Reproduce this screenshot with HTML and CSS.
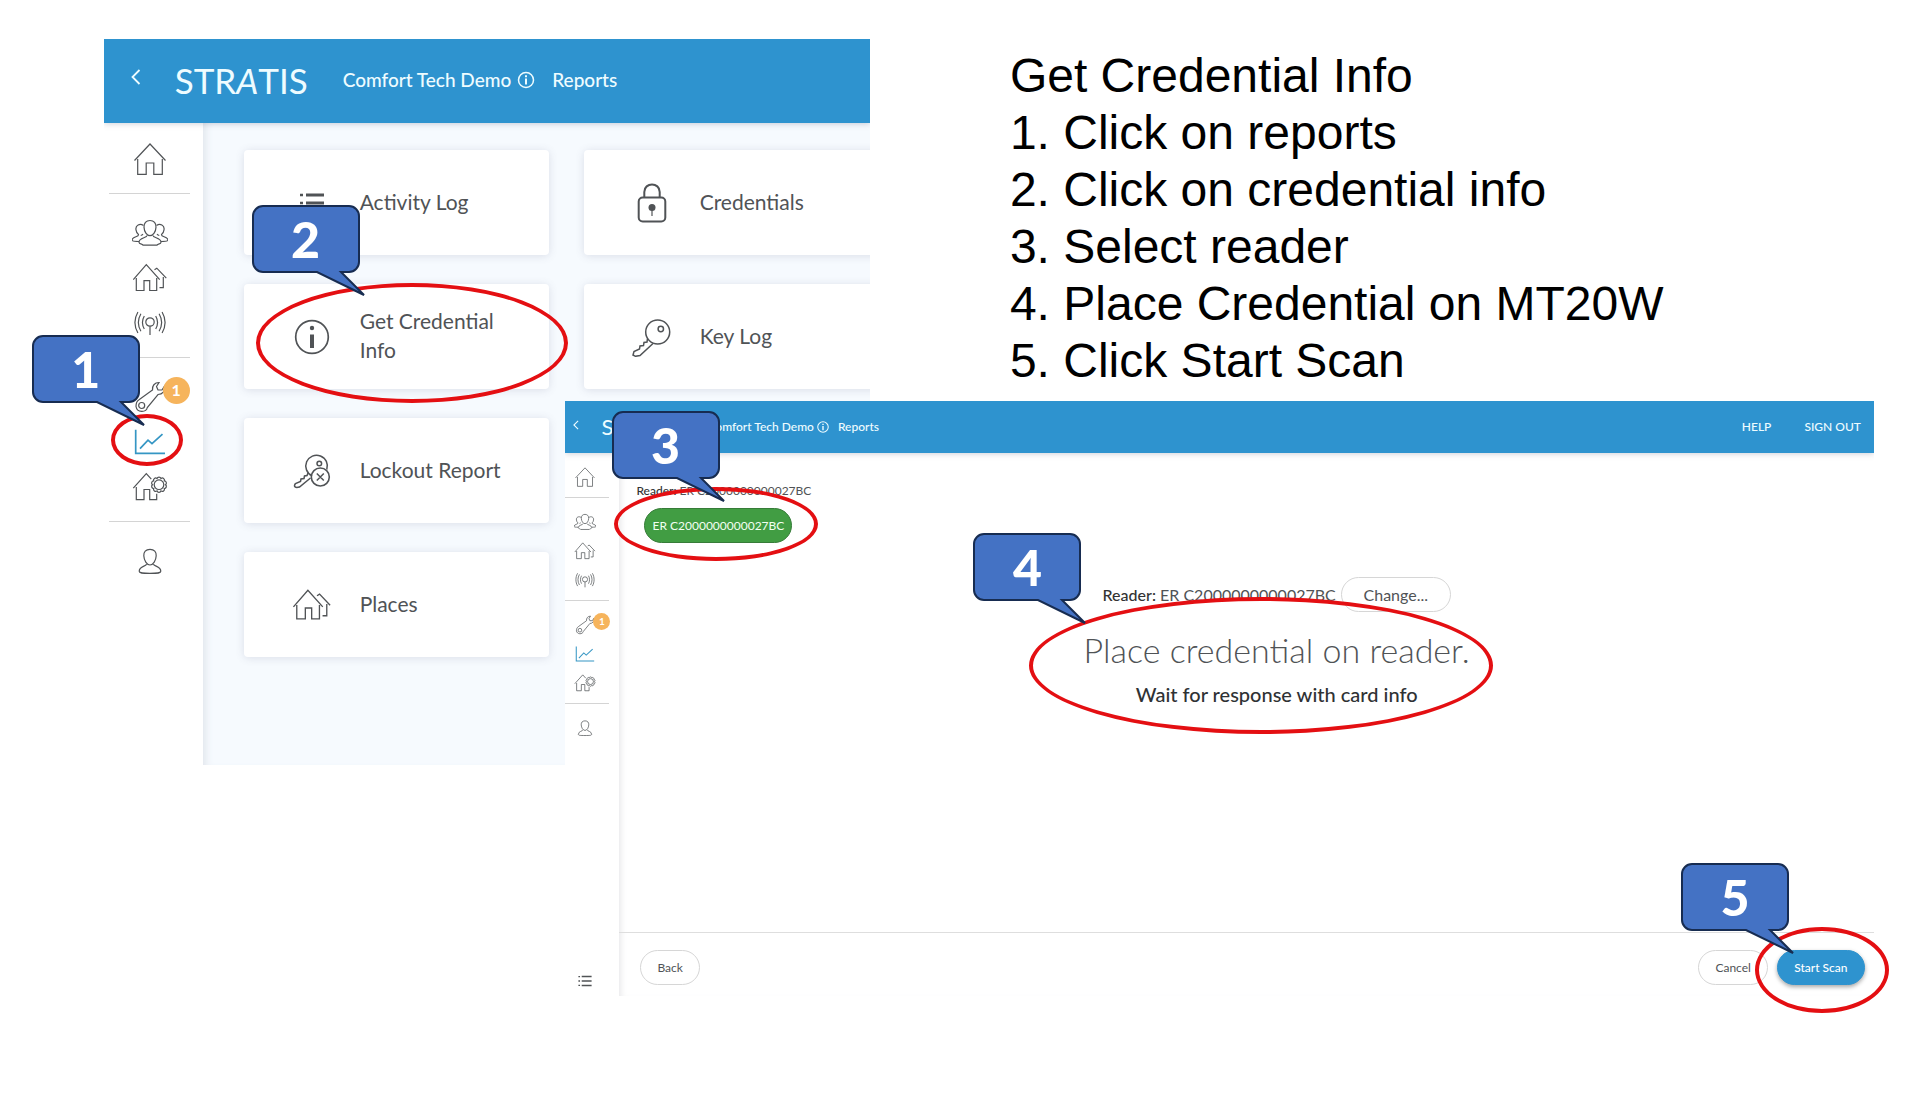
FILE: index.html
```html
<!DOCTYPE html>
<html lang="en">
<head>
<meta charset="utf-8">
<meta name="viewport" content="width=device-width, initial-scale=1">
<title>Get Credential Info</title>
<link rel="stylesheet" href="styles.css">
</head>
<body>
<svg class="sprite" aria-hidden="true">
  <defs>
    <symbol id="i-back" viewBox="0 0 10 16"><path d="M8.500 1L1.500 8l7 7" stroke-width="1.800"/></symbol>
    <symbol id="i-home" viewBox="0 0 36 36"><path d="M2.500 19.500L18 3l15.500 16.500M5.700 18v15.300h8.500V22h7.600v11.300h8.500V18"/></symbol>
    <symbol id="i-people" viewBox="0 0 36 36">
      <path d="M18 5.500c4 0 6.200 2.600 6 6.600-.2 4.600-2.800 8.600-6 8.600s-5.800-4-6-8.600c-.2-4 2-6.600 6-6.600z"/>
      <path d="M15 20.500c0 2.500-8 2.300-8 6.700 0 2 4 1.800 4 3h14c0-1.200 4-1 4-3 0-4.400-8-4.200-8-6.700"/>
      <path d="M11.500 10.500c-3.500-2.500-8.300-.5-7.500 4.300.3 2.200 1.200 3.800 2.500 4.700.5 2.500-6 2-6.500 5.500 0 1.500 2.500 1.500 7 1.500M11 19c-.8 1-1.800 1.700-2 .8"/>
      <path d="M24.500 10.500c3.500-2.500 8.300-.5 7.500 4.300-.3 2.200-1.200 3.800-2.500 4.700-.5 2.500 6 2 6.500 5.500 0 1.500-2.500 1.500-7 1.500M25 19c.8 1 1.800 1.700 2 .8"/>
    </symbol>
    <symbol id="i-houses" viewBox="0 0 36 36"><path d="M1.300 19.700L14.300 4.700l13.400 15M4.300 18v12.500h7.700v-9.800h5.700v9.800h7V18M22.500 9.700l2.300-1.500 9.500 10M31.300 17v10.700H27.500"/></symbol>
    <symbol id="i-antenna" viewBox="0 0 36 36"><circle cx="18" cy="17" r="4.200"/><path d="M18 21.200V30M12.300 11c-2.300 4-2.300 9 0 13M8.900 8.800c-3.200 5.500-3.200 12 0 17.400M5.900 7c-3.700 6.500-3.700 14.500 0 21M23.700 11c2.300 4 2.300 9 0 13M27.100 8.800c3.200 5.500 3.200 12 0 17.400M30.100 7c3.700 6.500 3.700 14.500 0 21"/></symbol>
    <symbol id="i-wrench" viewBox="0 0 36 36"><circle cx="9.700" cy="26.500" r="3"/><path d="M7 20.800L20.500 11c-.5-4 2-7.500 6.500-7.500l-2.500 4 1.500 3.500h4l2.500-4c1 5-2 8.500-6.500 8.500L15.300 28.500c-1 5-10.300 5.500-11.300-1 0-3 1-5.500 3-6.700z"/></symbol>
    <symbol id="i-chart" viewBox="0 0 36 36"><path d="M3.700 5.700v23.600H33M8 24.700l8-8.500 4 3.500 10.500-9.500" stroke-width="1.700"/></symbol>
    <symbol id="i-housegear" viewBox="0 0 36 36">
      <path d="M1.300 19.200l13-14.500 5 5.500M4.300 18v12.700h7.700V20.500h5.700v10.200h7v-6"/>
      <circle cx="27" cy="15.700" r="4.800"/>
      <path d="M33.500 15.700A2.100 2.100 0 0 1 32.300 19.500A2.100 2.100 0 0 1 29 21.900A2.100 2.100 0 0 1 25 21.900A2.100 2.100 0 0 1 21.700 19.500A2.100 2.100 0 0 1 20.500 15.700A2.100 2.100 0 0 1 21.700 11.900A2.100 2.100 0 0 1 25 9.500A2.100 2.100 0 0 1 29 9.500A2.100 2.100 0 0 1 32.300 11.900A2.100 2.100 0 0 1 33.500 15.700z"/>
    </symbol>
    <symbol id="i-person" viewBox="0 0 36 36"><path d="M18 6.300c4.300 0 6.400 2.700 6.200 6.500-.2 4.600-3 9.200-6.200 9.200s-6-4.600-6.200-9.200c-.2-3.800 1.900-6.500 6.200-6.500zM14.500 21c0 2.500-7.300 2-7.300 7.300 0 2 2.800 2 10.800 2s10.800 0 10.800-2c0-5.300-7.300-4.800-7.300-7.300"/></symbol>
    <symbol id="i-list" viewBox="0 0 40 40"><path d="M14 12h18M14 20h18M14 28h18" stroke-width="2.800"/><path d="M8 12h3M8 20h3M8 28h3" stroke-width="2.600"/></symbol>
    <symbol id="i-info" viewBox="0 0 40 40"><circle cx="20" cy="20" r="16.300" stroke-width="1.700"/><path d="M20 17.500V31" stroke-width="4"/><circle cx="20" cy="11" r="2.200" fill="currentColor" stroke="none"/></symbol>
    <symbol id="i-info-bold" viewBox="0 0 20 20"><circle cx="10" cy="10" r="7.500" stroke-width="1.500"/><path d="M10 8.500v6M10 5.300v2" stroke-width="2"/></symbol>
    <symbol id="i-lock" viewBox="0 0 40 40"><rect x="6.700" y="14.500" width="26.600" height="24" rx="4" stroke-width="2"/><path d="M12.300 14v-5c0-10 15.400-10 15.400 0v5" stroke-width="2"/><circle cx="20" cy="24.500" r="3.500" fill="currentColor" stroke="none"/><path d="M20 25v8"/></symbol>
    <symbol id="i-key" viewBox="0 0 40 40"><circle cx="25.700" cy="15" r="12" stroke-width="1.500"/><circle cx="28.800" cy="12" r="2.700" stroke-width="1.500"/><path d="M15.500 21.500L15 25l-3 .5-.5 3-3.500.5-.5 3-5.500 2.500-1 3.500 2.500 1.300 4.500-.8L21 26.500" stroke-width="1.500"/></symbol>
    <symbol id="i-lockout" viewBox="0 0 40 40"><path d="M20 24.800A10.800 10.800 0 1 1 34.800 18.500" stroke-width="1.500"/><circle cx="27.300" cy="12.500" r="2.300" stroke-width="1.500"/><circle cx="28.300" cy="26" r="9" stroke-width="1.600"/><path d="M24.800 22.500l7 7M31.800 22.500l-7 7M16 22l-1 2.500-2.500.5-.5 2.500-3 .5-.5 2.500-5 2c-2.500 3.500 0 4.500 4 3.500L18.500 27" stroke-width="1.500"/></symbol>
    <symbol id="callout" viewBox="0 0 116 94"><path d="M12 2h86a10 10 0 0 1 10 10v46a10 10 0 0 1-10 10H90L113 91 66 68H12A10 10 0 0 1 2 58V12A10 10 0 0 1 12 2z" fill="#4472c4" stroke="#172c51" stroke-width="2"/></symbol>
  </defs>
</svg>

<main class="slide">
  <section class="app app-large" aria-label="Reports menu">
    <header class="topbar">
      <button class="back" type="button" aria-label="Back"><svg><use href="#i-back"/></svg></button>
      <span class="logo">STR<i>A</i>TIS</span>
      <a class="crumb" href="#">Comfort Tech Demo</a>
      <svg class="crumb-info"><use href="#i-info-bold"/></svg>
      <a class="crumb" href="#">Reports</a>
    </header>
    <div class="body">
      <nav class="sidebar">
        <div class="group"><a href="#" aria-label="Home"><svg><use href="#i-home"/></svg></a></div>
        <div class="group">
          <a href="#" aria-label="Residents"><svg><use href="#i-people"/></svg></a>
          <a href="#" aria-label="Places"><svg><use href="#i-houses"/></svg></a>
          <a href="#" aria-label="Network"><svg><use href="#i-antenna"/></svg></a>
        </div>
        <div class="group">
          <a href="#" aria-label="Maintenance"><svg><use href="#i-wrench"/></svg><span class="badge">1</span></a>
          <a class="active" href="#" aria-label="Reports"><svg><use href="#i-chart"/></svg></a>
          <a href="#" aria-label="Property settings"><svg><use href="#i-housegear"/></svg></a>
        </div>
        <div class="group"><a href="#" aria-label="Account"><svg><use href="#i-person"/></svg></a></div>
      </nav>
      <div class="cards">
        <a class="card" href="#"><svg><use href="#i-list"/></svg><span>Activity Log</span></a>
        <a class="card" href="#"><svg><use href="#i-lock"/></svg><span>Credentials</span></a>
        <a class="card" href="#"><svg><use href="#i-info"/></svg><span>Get Credential Info</span></a>
        <a class="card" href="#"><svg><use href="#i-key"/></svg><span>Key Log</span></a>
        <a class="card first" href="#"><svg><use href="#i-lockout"/></svg><span>Lockout Report</span></a>
        <a class="card first" href="#"><svg><use href="#i-houses"/></svg><span>Places</span></a>
      </div>
    </div>
  </section>

  <section class="app app-small" aria-label="Credential scan">
    <header class="topbar">
      <button class="back" type="button" aria-label="Back"><svg><use href="#i-back"/></svg></button>
      <span class="logo">STR<i>A</i>TIS</span>
      <a class="crumb" href="#">Comfort Tech Demo</a>
      <svg class="crumb-info"><use href="#i-info-bold"/></svg>
      <a class="crumb" href="#">Reports</a>
      <div class="account"><a class="crumb" href="#">HELP</a><a class="crumb" href="#">SIGN OUT</a></div>
    </header>
    <div class="body">
      <nav class="sidebar">
        <div class="group"><a href="#" aria-label="Home"><svg><use href="#i-home"/></svg></a></div>
        <div class="group">
          <a href="#" aria-label="Residents"><svg><use href="#i-people"/></svg></a>
          <a href="#" aria-label="Places"><svg><use href="#i-houses"/></svg></a>
          <a href="#" aria-label="Network"><svg><use href="#i-antenna"/></svg></a>
        </div>
        <div class="group">
          <a href="#" aria-label="Maintenance"><svg><use href="#i-wrench"/></svg><span class="badge">1</span></a>
          <a class="active" href="#" aria-label="Reports"><svg><use href="#i-chart"/></svg></a>
          <a href="#" aria-label="Property settings"><svg><use href="#i-housegear"/></svg></a>
        </div>
        <div class="group"><a href="#" aria-label="Account"><svg><use href="#i-person"/></svg></a></div>
        <div class="group bottom"><a href="#" aria-label="Log"><svg><use href="#i-list"/></svg></a></div>
      </nav>
      <div class="scan">
        <div class="picker">
          <p><b>Reader:</b> ER C2000000000027BC</p>
          <button class="pill pill-green" type="button">ER C2000000000027BC</button>
        </div>
        <div class="prompt">
          <div class="reader"><span><b>Reader:</b> ER C2000000000027BC</span><button class="pill pill-change" type="button">Change...</button></div>
          <h2>Place credential on reader.</h2>
          <p>Wait for response with card info</p>
        </div>
        <footer class="actions">
          <button class="pill" type="button">Back</button>
          <button class="pill pill-cancel" type="button">Cancel</button>
          <button class="pill pill-blue" type="button">Start Scan</button>
        </footer>
      </div>
    </div>
  </section>

  <section class="steps">
    <h1>Get Credential Info</h1>
    <ol>
      <li>Click on reports</li>
      <li>Click on credential info</li>
      <li>Select reader</li>
      <li>Place Credential on MT20W</li>
      <li>Click Start Scan</li>
    </ol>
  </section>

  <div class="ring ring-1"></div>
  <div class="ring ring-2"></div>
  <div class="ring ring-3"></div>
  <div class="ring ring-4"></div>
  <div class="ring ring-5"></div>
  <div class="callout callout-1"><svg><use href="#callout"/></svg><span>1</span></div>
  <div class="callout callout-2"><svg><use href="#callout"/></svg><span>2</span></div>
  <div class="callout callout-3"><svg><use href="#callout"/></svg><span>3</span></div>
  <div class="callout callout-4"><svg><use href="#callout"/></svg><span>4</span></div>
  <div class="callout callout-5"><svg><use href="#callout"/></svg><span>5</span></div>
</main>
</body>
</html>
```
FILE: styles.css
```css
* { box-sizing: border-box; }

body {
  margin: 0;
  background: #fff;
  color: #505356;
  font-family: Lato, "Open Sans", sans-serif;
}

a { color: inherit; text-decoration: none; }
p, h1, h2, ol { margin: 0; padding: 0; font-weight: 400; }
button { font: inherit; color: inherit; cursor: pointer; }
svg { display: block; fill: none; stroke: currentColor; stroke-width: 1.2; }
.sprite { position: absolute; width: 0; height: 0; }

.slide { position: relative; min-height: 100vh; overflow: hidden; }

/* Application windows */
.app {
  position: absolute;
  isolation: isolate;
  display: flex;
  flex-direction: column;
  overflow: hidden;
  background: #fff;
}
.app-large {
  --icon: 36px;
  --bar: 84px;
  left: 5.4%;
  top: 39px;
  width: 39.9%;
  min-height: 726px;
}
.app-small {
  --icon: 22px;
  --bar: 52px;
  left: 29.45%;
  top: 401px;
  width: 68.15%;
  min-height: 595px;
  font-size: 12px;
}

.topbar {
  position: relative;
  z-index: 1;
  display: flex;
  align-items: center;
  height: var(--bar);
  background: #2e93cf;
  color: #eefcff;
  font-size: 19px;
  font-weight: 500;
  white-space: nowrap;
  box-shadow: 0 1px 6px rgba(70, 80, 110, 0.25);
}
.app-large .topbar { padding: 0 0 3px 27px; }
.app-small .topbar { padding: 0 13px 1px 8px; font-size: 12px; }

.back { flex: none; width: 44px; padding: 0 0 6px; border: 0; background: none; }
.back svg { width: 10px; height: 16px; }
.app-small .back { width: 28px; padding-bottom: 4px; }
.app-small .back svg { width: 6px; height: 10px; }

.logo { flex: none; width: 168px; font-size: 35px; font-weight: 400; line-height: 48px; }
.app-small .logo { width: 106px; font-size: 22px; line-height: 30px; }

.crumb-info { flex: none; width: 20px; height: 20px; margin: 0 16px 0 5px; }
.app-small .crumb-info { width: 14px; height: 14px; margin: 0 8px 0 2px; }
.account { display: flex; gap: 33px; margin-left: auto; }

.body { display: flex; flex: 1; }

/* Icon navigation */
.sidebar {
  display: flex;
  flex: none;
  flex-direction: column;
  width: 99px;
  padding: 0 13px 0 5px;
  background: #fff;
}
.app-small .sidebar { width: 54px; padding: 0 10px 0 0; }
.group {
  display: flex;
  flex-direction: column;
  align-items: center;
  gap: 9px;
  padding: 21px 0 16px 1px;
  border-bottom: 1px solid #d4d4d4;
}
.group:first-child { padding-top: 18px; }
.group:nth-child(n + 4) { border-bottom: 0; }
.group a { position: relative; }
.group svg { width: var(--icon); height: var(--icon); }
.app-small .group { gap: 7px; padding: 13px 4px 9px 0; }
.app-small .bottom { margin-top: auto; padding-bottom: 4px; }
.active { color: #3596c4; }
.badge {
  position: absolute;
  top: -2px;
  left: 31px;
  width: 27px;
  height: 27px;
  border-radius: 50%;
  background: #f6b45c;
  color: #fff;
  font-size: 16px;
  font-weight: 700;
  line-height: 26px;
  text-align: center;
}
.app-small .badge { top: -1px; left: 19px; width: 17px; height: 17px; font-size: 10px; line-height: 16px; }

/* Report cards */
.cards {
  display: grid;
  flex: 1;
  grid-template-columns: 305px 305px;
  grid-auto-rows: 105px;
  align-content: start;
  gap: 29px 35px;
  padding: 27px 0 0 41px;
  background: #f6fafe;
  box-shadow: inset 8px 0 8px -6px #dfe3ea;
}
.card {
  display: flex;
  align-items: center;
  gap: 28px;
  padding: 0 40px 0 48px;
  border-radius: 4px;
  background: #fff;
  box-shadow: 0 1px 8px rgba(80, 80, 120, 0.16);
  font-size: 21px;
  line-height: 29px;
}
.card span { padding-bottom: 3px; }
.card svg { flex: none; width: 40px; height: 40px; }
.first { grid-column: 1; }

/* Scan screen */
.scan {
  display: flex;
  flex: 1;
  flex-direction: column;
  box-shadow: inset 6px 0 6px -4px #e8e8ea;
}
.scan b { font-weight: 500; color: #333; }
.picker { padding: 29px 17px 0; line-height: 18px; }
.pill {
  height: 35px;
  padding: 0 16px;
  border: 1px solid #d6d6d6;
  border-radius: 18px;
  background: #fff;
  font-size: 12px;
}
.pill-green {
  width: 148px;
  margin: 8px 0 0 8px;
  padding: 0;
  border-color: #367c38;
  background: #419d43;
  color: #f2fff2;
}
.pill-change { width: 110px; padding: 0; font-size: 16px; }
.pill-cancel { margin-left: auto; }
.pill-blue {
  width: 88px;
  padding: 0;
  border-color: #2e93cf;
  background: #2e93cf;
  color: #fff;
  font-weight: 500;
  box-shadow: 0 2px 4px rgba(0, 0, 0, 0.35);
}
.prompt {
  display: flex;
  flex-direction: column;
  align-items: center;
  padding: 34px 0 0 60px;
}
.reader { display: flex; align-items: center; gap: 5px; font-size: 16px; }
.prompt h2 { margin-top: 16px; font-size: 34px; font-weight: 300; line-height: 44px; }
.prompt p { margin-top: 10px; color: #2f3234; font-size: 20px; font-weight: 500; line-height: 24px; }
.actions {
  display: flex;
  gap: 9px;
  height: 64px;
  margin-top: auto;
  padding: 17px 9px 0 21px;
  border-top: 1px solid #dedede;
}

/* Written steps */
.steps {
  position: absolute;
  top: 47px;
  left: 52.6%;
  color: #000;
  font-family: "Liberation Sans", Arial, sans-serif;
  font-size: 48px;
  line-height: 57px;
  white-space: nowrap;
}
.steps h1 { font-size: 48px; }
.steps ol { counter-reset: step; list-style: none; }
.steps li { counter-increment: step; }
.steps li::before { content: counter(step) ". "; }

/* Annotations */
.ring {
  position: absolute;
  border: 4px solid #e40f12;
  border-radius: 50%;
  pointer-events: none;
}
.ring-1 { left: 5.8%; top: 414px; width: 72px; height: 52px; }
.ring-2 { left: 13.35%; top: 283px; width: 312px; height: 120px; }
.ring-3 { left: 32%; top: 487px; width: 204px; height: 74px; }
.ring-4 { left: 53.6%; top: 597px; width: 464px; height: 137px; }
.ring-5 { left: 91.4%; top: 927px; width: 134px; height: 86px; }

.callout { position: absolute; width: 116px; height: 94px; pointer-events: none; }
.callout svg { width: 116px; height: 94px; }
.callout span {
  position: absolute;
  inset: 0 6px 24px 0;
  color: #fff;
  font-size: 50px;
  font-weight: 900;
  line-height: 70px;
  text-align: center;
}
.callout-1 { left: 1.6%; top: 334px; }
.callout-2 { left: 13.05%; top: 204px; }
.callout-3 { left: 31.8%; top: 410px; }
.callout-4 { left: 50.65%; top: 532px; }
.callout-5 { left: 87.5%; top: 862px; }
```
